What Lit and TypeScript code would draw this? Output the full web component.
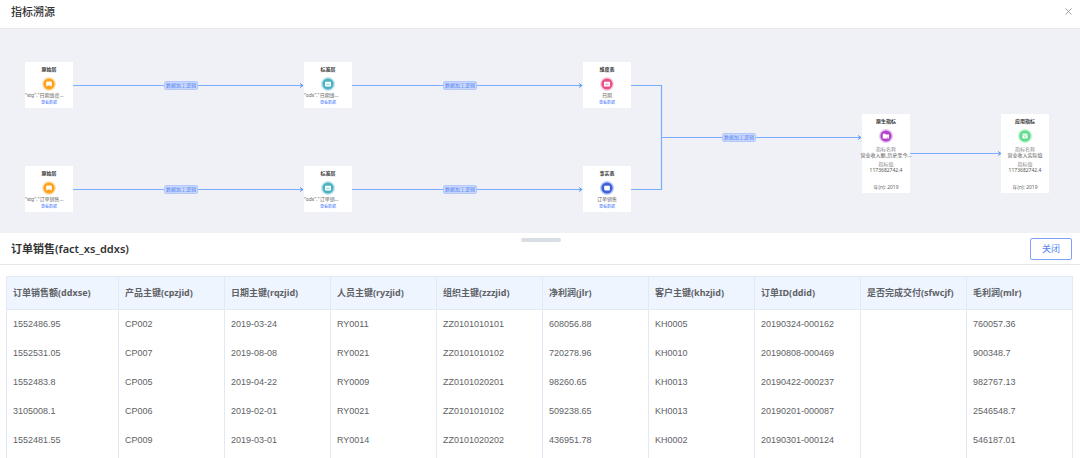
import { LitElement, html, css, svg } from "lit";
import { customElement, property } from "lit/decorators.js";
import { styleMap } from "lit/directives/style-map.js";

interface FlowNode {
  x: number;
  y: number;
  title: string;
  tone: string;
  name?: string;
  metric?: string;
}

const TONES: Record<string, [string, string]> = {
  orange: ["#fba21f", "#fde3b8"],
  teal: ["#4db3c4", "#c2e4ec"],
  pink: ["#e8508a", "#f9cfde"],
  blue: ["#3f61d6", "#b9cdf8"],
  purple: ["#b544c9", "#e9c4f4"],
  green: ["#5ddc8c", "#c0f3cf"],
};

const NODES: FlowNode[] = [
  { x: 25, y: 33, title: "原始层", tone: "orange", name: '"stg"."日期维度...' },
  { x: 25, y: 137, title: "原始层", tone: "orange", name: '"stg"."订单销售...' },
  { x: 304, y: 33, title: "标准层", tone: "teal", name: '"ods"."日期维...' },
  { x: 304, y: 137, title: "标准层", tone: "teal", name: '"ods"."订单销...' },
  { x: 583, y: 33, title: "维度表", tone: "pink", name: "日期" },
  { x: 583, y: 137, title: "事实表", tone: "blue", name: "订单销售" },
  { x: 862, y: 85, title: "原生指标", tone: "purple", metric: "营业收入额_历史至今..." },
  { x: 1001, y: 85, title: "应用指标", tone: "green", metric: "营业收入实际值" },
];

const TAGS: [number, number][] = [
  [164, 52],
  [164, 156],
  [443, 52],
  [443, 156],
  [722, 104],
];

const COLUMNS = [
  "订单销售额(ddxse)", "产品主键(cpzjid)", "日期主键(rqzjid)", "人员主键(ryzjid)", "组织主键(zzzjid)",
  "净利润(jlr)", "客户主键(khzjid)", "订单ID(ddid)", "是否完成交付(sfwcjf)", "毛利润(mlr)",
];

const ROWS = [
  ["1552486.95", "CP002", "2019-03-24", "RY0011", "ZZ0101010101", "608056.88", "KH0005", "20190324-000162", "", "760057.36"],
  ["1552531.05", "CP007", "2019-08-08", "RY0021", "ZZ0101010102", "720278.96", "KH0010", "20190808-000469", "", "900348.7"],
  ["1552483.8", "CP005", "2019-04-22", "RY0009", "ZZ0101020201", "98260.65", "KH0013", "20190422-000237", "", "982767.13"],
  ["3105008.1", "CP006", "2019-02-01", "RY0021", "ZZ0101010102", "509238.65", "KH0013", "20190201-000087", "", "2546548.7"],
  ["1552481.55", "CP009", "2019-03-01", "RY0014", "ZZ0101020202", "436951.78", "KH0002", "20190301-000124", "", "546187.01"],
];

@customElement("flow-node")
class FlowNodeElement extends LitElement {
  @property({ attribute: false }) node!: FlowNode;

  static styles = css`
    :host {
      display: flex;
      flex-direction: column;
      align-items: center;
      box-sizing: border-box;
      width: 48px;
      padding: 4px 0 2px;
      background: #fff;
      color: #666;
      font-size: 5px;
      line-height: 6px;
      white-space: nowrap;
    }
    .title {
      color: #333;
      font-weight: 700;
    }
    .icon {
      display: block;
      width: 14px;
      height: 14px;
      margin: 5px 0 1px;
    }
    .name {
      margin-bottom: 2px;
    }
    .wide {
      align-self: flex-start;
    }
    .link {
      color: #4a7dff;
      font-size: 4px;
      text-decoration: none;
    }
    .metric {
      display: flex;
      flex-direction: column;
      align-items: center;
      margin: 2px 0 11px;
    }
    .label {
      color: #888;
    }
    .value {
      margin-bottom: 3px;
      color: #555;
    }
    .last {
      margin-bottom: 0;
    }
    .year {
      margin-bottom: 1px;
    }
  `;

  render() {
    const n = this.node;
    const [main, halo] = TONES[n.tone];
    return html`
      <span class="title">${n.title}</span>
      <svg class="icon" viewBox="0 0 14 14" aria-hidden="true">
        <circle cx="7" cy="7" r="7" fill=${halo} />
        <circle cx="7" cy="7" r="5.6" fill=${main} />
        ${this.glyph(n.tone, main)}
      </svg>
      ${n.metric
        ? html`<div class="metric">
              <span class="label">指标名称</span>
              <span class="value">${n.metric}</span>
              <span class="label">指标值</span>
              <span class="value last">1173682742.4</span>
            </div>
            <span class="year">年(n): 2019</span>`
        : html`<span class="name ${n.name!.length > 10 ? "wide" : ""}">${n.name}</span>
            <a class="link" href="#data">查看数据</a>`}
    `;
  }

  private glyph(tone: string, main: string) {
    if (tone === "orange")
      return svg`<path d="M4.2 5.4q0-1 1-1h3.6q1 0 1 1v3.4q0 .6-.6.6l-.8-.9H5.6l-.8.9q-.6 0-.6-.6z" fill="#fff"/>`;
    if (tone === "purple")
      return svg`<path d="M3.8 4.8h2.5l.7.8h3v4H3.8z" fill="#fff"/><path d="M8 8.4h1.2" stroke=${main} stroke-width=".6"/>`;
    if (tone === "blue")
      return svg`<path d="M4.2 4.8h5.6v4.6H5.2l-1-1z" fill="#fff"/>`;
    if (tone === "green")
      return svg`<rect x="4.4" y="4.4" width="5.2" height="5.2" rx=".6" fill="#fff"/><path d="M4.4 6h5.2M7 7v1.6M6.2 7.8h1.6" stroke=${main} stroke-width=".5"/>`;
    return svg`<rect x="4" y="4.7" width="6" height="4.7" rx=".6" fill="#fff"/><path d="M5.3 7.3h3.4" stroke=${main} stroke-width=".7"/>`;
  }
}

@customElement("app-root")
class AppRoot extends LitElement {
  static styles = css`
    :host {
      display: flex;
      flex-direction: column;
      height: 100vh;
      overflow: hidden;
      background: #fff;
      font-family: "Noto Sans", "Noto Sans CJK SC", sans-serif;
    }
    .bar {
      display: flex;
      flex: none;
      align-items: center;
      justify-content: space-between;
      box-sizing: border-box;
      padding: 0 8px 0 11px;
      color: #333;
    }
    .top {
      height: 29px;
      padding: 0 6px 5px 11px;
      border-bottom: 1px solid #e8e9ee;
    }
    .heading {
      margin: 0;
      font-size: 11px;
      line-height: 16px;
      font-weight: 500;
    }
    .strong {
      font-weight: 600;
    }
    .close {
      display: flex;
      padding: 2px;
      border: 0;
      background: none;
    }
    .cross {
      width: 7px;
      height: 7px;
    }
    .canvas {
      position: relative;
      flex: none;
      height: 204px;
      background: #eff1f6;
    }
    .edges {
      display: block;
      width: 1080px;
      height: 204px;
    }
    .node,
    .tag,
    .grip {
      position: absolute;
    }
    .tag {
      box-sizing: border-box;
      width: 34px;
      height: 9px;
      border: 1px solid #b5c9fb;
      border-radius: 2px;
      background: #c9d8fb;
      color: #5583f5;
      font-size: 5px;
      line-height: 7px;
      text-align: center;
      white-space: nowrap;
    }
    .grip {
      left: 50%;
      top: 100%;
      width: 40px;
      height: 4px;
      margin: 5px 0 0 -19px;
      border-radius: 2px;
      background: #d9dee5;
    }
    .detail {
      height: 32px;
      border-bottom: 1px solid #e6e7ea;
    }
    .shut {
      box-sizing: border-box;
      width: 42px;
      height: 22px;
      padding: 0;
      border: 1px solid #80a3fa;
      border-radius: 2px;
      background: #fff;
      color: #5583f5;
      font: inherit;
      font-size: 9px;
    }
    .sheet {
      flex: 1;
      min-height: 0;
      padding: 11px 7px 0 6px;
      overflow: hidden;
    }
    .grid {
      width: 100%;
      height: 100%;
      border-collapse: collapse;
      table-layout: fixed;
      color: #606266;
      font-size: 9px;
      line-height: 13px;
    }
    .first {
      width: 112px;
    }
    .head,
    .cell {
      box-sizing: border-box;
      padding: 0 0 0 6px;
      border: 1px solid #e3e9f4;
      text-align: left;
      white-space: nowrap;
    }
    .head {
      height: 33px;
      padding-bottom: 1px;
      background: #eef5ff;
      font-weight: 700;
    }
    .cell {
      height: 29px;
      border-width: 0 1px;
      font-family: "Liberation Sans", "Noto Sans CJK SC", sans-serif;
    }
    .rest {
      height: auto;
    }
  `;

  render() {
    return html`
      <header class="bar top">
        <h1 class="heading">指标溯源</h1>
        <button class="close" aria-label="关闭窗口">
          <svg class="cross" viewBox="0 0 7 7"><path d="M.5.5l6 6m0-6l-6 6" stroke="#999" stroke-width=".9" /></svg>
        </button>
      </header>
      <section class="canvas">
        <svg class="edges" viewBox="0 0 1080 204" fill="none" aria-hidden="true">
          <path
            d="M73 56.5H303M352 56.5H582M73 160.5H303M352 160.5H582M631 56.5H661.5V160.5H631M661.5 108.5H861M910 124.5H1001"
            stroke="#78adff"
            stroke-width="1.2"
          />
          <path
            d="M300 54.5l3 2-3 2M579 54.5l3 2-3 2M300 158.5l3 2-3 2M579 158.5l3 2-3 2M858 106.5l3 2-3 2M998 122.5l3 2-3 2"
            stroke="#5b96fa"
          />
        </svg>
        ${NODES.map(
          (n) => html`<flow-node class="node" style=${styleMap({ left: `${n.x}px`, top: `${n.y}px` })} .node=${n}></flow-node>`
        )}
        ${TAGS.map(([x, y]) => html`<span class="tag" style=${styleMap({ left: `${x}px`, top: `${y}px` })}>数据加工逻辑</span>`)}
        <div class="grip"></div>
      </section>
      <div class="bar detail">
        <h2 class="heading strong">订单销售(fact_xs_ddxs)</h2>
        <button class="shut">关闭</button>
      </div>
      <div class="sheet" id="data">
        <table class="grid">
          <thead>
            <tr>${COLUMNS.map((c, i) => html`<th class="head ${i ? "" : "first"}" scope="col">${c}</th>`)}</tr>
          </thead>
          <tbody>
            ${ROWS.map((r) => html`<tr>${r.map((v) => html`<td class="cell">${v}</td>`)}</tr>`)}
            <tr>${COLUMNS.map(() => html`<td class="cell rest"></td>`)}</tr>
          </tbody>
        </table>
      </div>
    `;
  }
}
